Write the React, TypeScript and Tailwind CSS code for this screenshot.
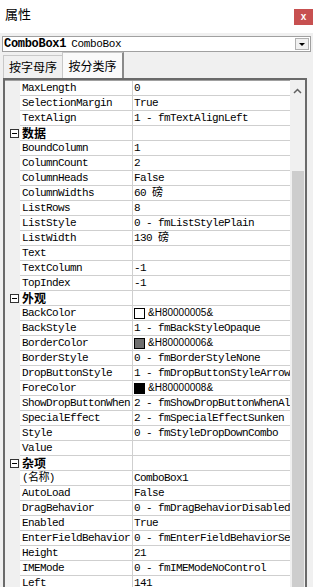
import React from 'react';

type Row =
  | { kind: 'cat'; name: string }
  | { kind: 'prop'; name: string; value: string; swatch?: string };

const rows: Row[] = [
  { kind: 'prop', name: 'MaxLength', value: '0' },
  { kind: 'prop', name: 'SelectionMargin', value: 'True' },
  { kind: 'prop', name: 'TextAlign', value: '1 - fmTextAlignLeft' },
  { kind: 'cat', name: '数据' },
  { kind: 'prop', name: 'BoundColumn', value: '1' },
  { kind: 'prop', name: 'ColumnCount', value: '2' },
  { kind: 'prop', name: 'ColumnHeads', value: 'False' },
  { kind: 'prop', name: 'ColumnWidths', value: '60 磅' },
  { kind: 'prop', name: 'ListRows', value: '8' },
  { kind: 'prop', name: 'ListStyle', value: '0 - fmListStylePlain' },
  { kind: 'prop', name: 'ListWidth', value: '130 磅' },
  { kind: 'prop', name: 'Text', value: '' },
  { kind: 'prop', name: 'TextColumn', value: '-1' },
  { kind: 'prop', name: 'TopIndex', value: '-1' },
  { kind: 'cat', name: '外观' },
  { kind: 'prop', name: 'BackColor', value: '&H80000005&', swatch: 'bg-white' },
  { kind: 'prop', name: 'BackStyle', value: '1 - fmBackStyleOpaque' },
  { kind: 'prop', name: 'BorderColor', value: '&H80000006&', swatch: 'bg-[#6e6e6e]' },
  { kind: 'prop', name: 'BorderStyle', value: '0 - fmBorderStyleNone' },
  { kind: 'prop', name: 'DropButtonStyle', value: '1 - fmDropButtonStyleArrow' },
  { kind: 'prop', name: 'ForeColor', value: '&H80000008&', swatch: 'bg-black' },
  { kind: 'prop', name: 'ShowDropButtonWhen', value: '2 - fmShowDropButtonWhenAlways' },
  { kind: 'prop', name: 'SpecialEffect', value: '2 - fmSpecialEffectSunken' },
  { kind: 'prop', name: 'Style', value: '0 - fmStyleDropDownCombo' },
  { kind: 'prop', name: 'Value', value: '' },
  { kind: 'cat', name: '杂项' },
  { kind: 'prop', name: '(名称)', value: 'ComboBox1' },
  { kind: 'prop', name: 'AutoLoad', value: 'False' },
  { kind: 'prop', name: 'DragBehavior', value: '0 - fmDragBehaviorDisabled' },
  { kind: 'prop', name: 'Enabled', value: 'True' },
  { kind: 'prop', name: 'EnterFieldBehavior', value: '0 - fmEnterFieldBehaviorSelectAll' },
  { kind: 'prop', name: 'Height', value: '21' },
  { kind: 'prop', name: 'IMEMode', value: '0 - fmIMEModeNoControl' },
  { kind: 'prop', name: 'Left', value: '141' },
];

const mono = "font-['Liberation_Mono','Noto_Sans_CJK_SC',monospace] text-[11px] tracking-[-0.6px]";
const cjk = "font-['Noto_Sans_CJK_SC',sans-serif]";

function GridRow({ row }: { row: Row }) {
  if (row.kind === 'cat') {
    return (
      <div className="flex h-[15px] shrink-0">
        <div className="w-[15px] flex items-center justify-center bg-[#f0f0f0]">
          <div className="w-[9px] h-[9px] border border-[#333] bg-white flex items-center justify-center ml-[4px]">
            <div className="w-[5px] h-px bg-black" />
          </div>
        </div>
        <div className={`w-[113px] border-b border-r border-[#cfcfcf] pl-[2px] flex items-center text-[12px] font-bold leading-none text-black ${cjk}`}>
          {row.name}
        </div>
        <div className="flex-1 border-b border-[#cfcfcf]" />
      </div>
    );
  }
  return (
    <div className="flex h-[15px] shrink-0">
      <div className="w-[15px] bg-[#f0f0f0]" />
      <div className={`w-[113px] border-b border-r border-[#cfcfcf] pl-[2px] flex items-center leading-none text-black whitespace-nowrap overflow-hidden ${mono}`}>
        {row.name}
      </div>
      <div className="flex-1 min-w-0 border-b border-[#cfcfcf] pl-[1px] flex items-center overflow-hidden">
        {row.swatch ? (
          <>
            <div className={`w-[11px] h-[11px] border border-black shrink-0 ${row.swatch}`} />
            <span className="ml-[3px] text-[10px] leading-none text-black font-['Liberation_Sans',sans-serif] whitespace-nowrap">
              {row.value}
            </span>
          </>
        ) : (
          <span className={`leading-none text-black whitespace-nowrap ${mono}`}>{row.value}</span>
        )}
      </div>
    </div>
  );
}

export default function App() {
  return (
    <div className="w-[313px] h-[587px] overflow-hidden bg-[#f0f0f0] flex flex-col">
      {/* Title */}
      <div className="h-[33px] shrink-0 bg-white flex items-start justify-between">
        <span className={`mt-[4px] ml-[5px] text-[13px] text-black ${cjk}`}>属性</span>
        <div className="mt-[9px] w-[19px] h-[16px] bg-[#c75050] flex items-center justify-center">
          <span className="text-white text-[10px] font-bold leading-none font-['Liberation_Sans',sans-serif]">x</span>
        </div>
      </div>

      {/* Object combo */}
      <div className="mt-[3px] mx-[2px] h-[16px] shrink-0 bg-white border border-[#a0a0a0] flex items-center">
        <span className="ml-[1px] font-['Liberation_Mono',monospace] text-[12px] font-bold leading-none tracking-[-0.3px] text-black">ComboBox1</span>
        <span className="ml-[5px] font-['Liberation_Mono',monospace] text-[11px] leading-none tracking-[-0.35px] text-black">ComboBox</span>
        <div className="ml-auto mr-[1px] w-[14px] h-[12px] bg-[#f0f0f0] border border-[#b0b0b0] flex items-center justify-center">
          <div className="w-0 h-0 border-l-[3px] border-r-[3px] border-t-[3px] border-l-transparent border-r-transparent border-t-black" />
        </div>
      </div>

      {/* Tabs */}
      <div className="h-[26px] shrink-0 flex items-end pl-[3px]">
        <div className={`h-[23px] w-[59px] border-l border-t border-[#c8c8c8] flex items-center justify-center text-[12px] text-black ${cjk}`}>
          按字母序
        </div>
        <div className={`h-[26px] w-[62px] bg-[#fafafa] border-l border-t border-r-2 border-[#c8c8c8] border-r-[#8a8a8a] flex items-center justify-center text-[12px] text-black ${cjk}`}>
          按分类序
        </div>
      </div>

      {/* Grid */}
      <div className="flex-1 min-h-0 ml-[3px] w-[304px] border-t-2 border-l-2 border-r-2 border-t-[#6a6a6a] border-l-[#6a6a6a] border-r-[#6a6a6a] flex overflow-hidden">
        <div className="flex-1 min-w-0 flex flex-col bg-white">
          <div className="h-px shrink-0 bg-[#a0a0a0]" />
          {rows.map((r, i) => (
            <GridRow key={i} row={r} />
          ))}
        </div>
        <div className="w-[15px] shrink-0 bg-[#f0f0f0] flex flex-col items-center">
          <svg width="9" height="6" viewBox="0 0 9 6" className="mt-[8px] mb-[77px]">
            <path d="M1 5 L4.5 1.5 L8 5" stroke="#606060" strokeWidth="1.5" fill="none" />
          </svg>
          <div className="w-[12px] flex-1 bg-[#cdcdcd] ml-[1px]" />
        </div>
      </div>
    </div>
  );
}
